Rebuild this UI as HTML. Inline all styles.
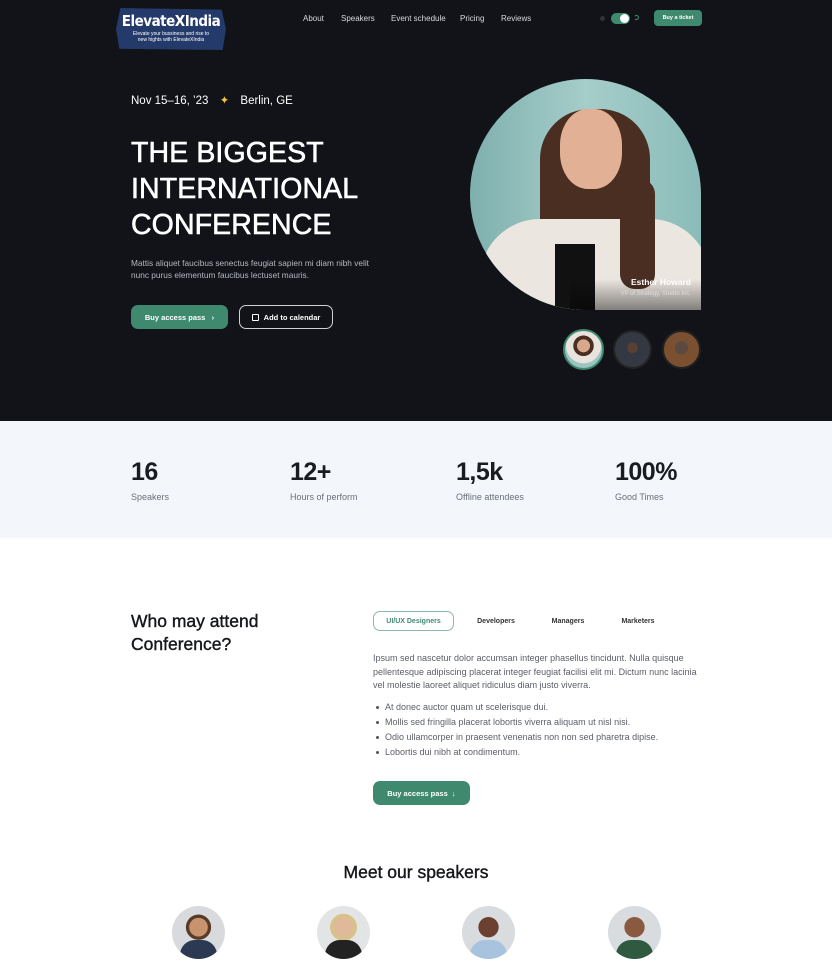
<!DOCTYPE html>
<html><head><meta charset="utf-8"><style>
*{margin:0;padding:0;box-sizing:border-box}
body{width:832px;height:974px;overflow:hidden;font-family:"Liberation Sans",sans-serif;background:#fff;position:relative}
.abs{position:absolute}
.hero{position:absolute;left:0;top:0;width:832px;height:421px;background:#111318}
.nav a{position:absolute;top:14px;color:#d8d9dc;font-size:8px}
.btn{position:absolute;border-radius:7px;font-size:7.5px;font-weight:bold;display:flex;align-items:center;justify-content:center;color:#fff}
.stats{position:absolute;left:0;top:421px;width:832px;height:117px;background:#f3f6fb}
.st{position:absolute;top:458px}
.st b{display:block;font-size:25px;color:#1a1c20;font-weight:bold;letter-spacing:-0.5px}
.st span{display:block;font-size:9px;color:#6b6f78;margin-top:5px}
.tab{position:absolute;top:611px;height:20px;font-size:7px;font-weight:bold;color:#333;display:flex;align-items:center;justify-content:center}
p.t{font-size:9px;color:#5a5e66;line-height:13.5px}
ul{list-style:none}
li{font-size:9px;color:#5a5e66;line-height:15px;padding-left:12px;position:relative}
li:before{content:"";position:absolute;left:3px;top:6px;width:3px;height:3px;border-radius:50%;background:#555}
.av{position:absolute;top:906px;width:53px;height:53px;border-radius:50%;background:#d5d8dc;overflow:hidden}
.semi{-webkit-text-stroke:0.6px currentColor}
</style></head><body>
<div class="hero"></div>
<div class="abs" style="left:116px;top:8px;width:110px;height:42px;background:#243a6b;clip-path:polygon(4% 0,96% 4%,100% 50%,97% 100%,3% 97%,0 50%)"></div>
<div class="abs" style="left:116px;top:12px;width:110px;text-align:center;color:#fff;font-size:15px;font-weight:bold;font-family:'DejaVu Sans Condensed','Liberation Sans',sans-serif;letter-spacing:-0.5px">ElevateXIndia</div>
<div class="abs" style="left:128px;top:32px;width:86px;text-align:center;color:#fff;font-size:5px;line-height:5.5px">Elevate your bussiness and rise to new hights with ElevateXIndia</div>
<div class="nav"><a style="left:303px">About</a><a style="left:341px">Speakers</a><a style="left:391px">Event schedule</a><a style="left:460px">Pricing</a><a style="left:501px">Reviews</a></div>
<div class="abs" style="left:600px;top:16px;width:5px;height:5px;border-radius:50%;background:#333"></div>
<div class="abs" style="left:611px;top:13px;width:19px;height:11px;border-radius:6px;background:#3f8a6f"></div>
<div class="abs" style="left:620px;top:14px;width:9px;height:9px;border-radius:50%;background:#fff"></div>
<div class="abs" style="left:634px;top:15px;width:5px;height:5px;border-radius:50%;border:1px solid #4a8a70;border-left-color:transparent"></div>
<div class="btn" style="left:654px;top:10px;width:48px;height:16px;background:#3f8a6f;border-radius:4px;font-size:5.5px">Buy a ticket</div>

<div class="abs" style="left:131px;top:93px;color:#fff;font-size:11.5px">Nov 15–16, ’23 <span style="color:#f5c242;margin:0 8px">✦</span> Berlin, GE</div>
<div class="abs semi" style="left:131px;top:135px;color:#fff;font-size:28.5px;line-height:36px;letter-spacing:0.1px">THE BIGGEST<br>INTERNATIONAL<br>CONFERENCE</div>
<div class="abs" style="left:131px;top:257px;width:240px;color:#b5b8be;font-size:8.3px;line-height:12px">Mattis aliquet faucibus senectus feugiat sapien mi diam nibh velit nunc purus elementum faucibus lectuset mauris.</div>
<div class="btn" style="left:131px;top:305px;width:97px;height:24px;background:#3f8a6f">Buy access pass &nbsp;&nbsp;›</div>
<div class="btn" style="left:239px;top:305px;width:94px;height:24px;border:1px solid #cfd1d4"><span style="display:inline-block;width:7px;height:7px;border:1px solid #fff;border-radius:1px;margin-right:5px"></span>Add to calendar</div>

<div class="abs" style="left:470px;top:79px;width:231px;height:231px;border-radius:50% 50% 0 50%;overflow:hidden;background:linear-gradient(90deg,#7fb0ae,#a5cdca 50%,#8bbcb9)">
 <div class="abs" style="left:70px;top:30px;width:110px;height:200px;border-radius:50px 50px 10px 10px;background:#4a2e22"></div>
 <div class="abs" style="left:90px;top:30px;width:62px;height:80px;border-radius:45%;background:#e2b195"></div>
 <div class="abs" style="left:10px;top:140px;width:230px;height:120px;border-radius:60px 60px 0 0;background:#ece6e0"></div>
 <div class="abs" style="left:150px;top:100px;width:35px;height:110px;border-radius:15px;background:#4a2e22"></div>
 <div class="abs" style="left:85px;top:165px;width:40px;height:80px;background:#111"></div>
 <div class="abs" style="left:100px;top:200px;width:131px;height:31px;background:linear-gradient(rgba(0,0,0,0),rgba(0,0,0,.45))"></div>
 <div class="abs" style="right:10px;top:198px;color:#fff;font-size:8.5px;font-weight:bold">Esther Howard</div>
 <div class="abs" style="right:10px;top:212px;color:#ddd;font-size:6px">VP of Strategy, Stretto Inc.</div>
</div>
<div class="abs" style="left:563px;top:329px;width:41px;height:41px;border-radius:50%;border:2px solid #3f8a6f;background:radial-gradient(circle at 50% 40%,#d9a88c 0 22%,#4a2e22 23% 35%,#e9e3dd 36% 60%,#9cc5c2 61%)"></div>
<div class="abs" style="left:613px;top:330px;width:39px;height:39px;border-radius:50%;border:2px solid #222;background:radial-gradient(circle at 50% 45%,#5a4030 0 20%,#333842 21%)"></div>
<div class="abs" style="left:662px;top:330px;width:39px;height:39px;border-radius:50%;border:2px solid #222;background:radial-gradient(circle at 50% 45%,#5a4a40 0 25%,#7a5030 26%)"></div>

<div class="stats"></div>
<div class="st" style="left:131px"><b>16</b><span>Speakers</span></div>
<div class="st" style="left:290px"><b>12+</b><span>Hours of perform</span></div>
<div class="st" style="left:456px"><b>1,5k</b><span>Offline attendees</span></div>
<div class="st" style="left:615px"><b>100%</b><span>Good Times</span></div>

<div class="abs semi" style="left:131px;top:610px;font-size:17.5px;color:#15171b;line-height:23px;-webkit-text-stroke:0.4px #15171b">Who may attend<br>Conference?</div>
<div class="tab" style="left:373px;width:81px;border:1px solid #8fb7a8;border-radius:7px;color:#3f8a6f">UI/UX Designers</div>
<div class="tab" style="left:468px;width:56px">Developers</div>
<div class="tab" style="left:542px;width:52px">Managers</div>
<div class="tab" style="left:612px;width:52px">Marketers</div>
<div class="abs" style="left:373px;top:652px;width:330px"><p class="t">Ipsum sed nascetur dolor accumsan integer phasellus tincidunt. Nulla quisque pellentesque adipiscing placerat integer feugiat facilisi elit mi. Dictum nunc lacinia vel molestie laoreet aliquet ridiculus diam justo viverra.</p></div>
<ul class="abs" style="left:373px;top:700px;width:330px">
<li>At donec auctor quam ut scelerisque dui.</li>
<li>Mollis sed fringilla placerat lobortis viverra aliquam ut nisl nisi.</li>
<li>Odio ullamcorper in praesent venenatis non non sed pharetra dipise.</li>
<li>Lobortis dui nibh at condimentum.</li></ul>
<div class="btn" style="left:373px;top:781px;width:97px;height:24px;background:#3f8a6f">Buy access pass &nbsp;↓</div>

<div class="abs" style="left:0;top:862px;width:832px;text-align:center;font-size:17.5px;color:#15171b;-webkit-text-stroke:0.4px #15171b">Meet our speakers</div>
<div class="av" style="left:172px;background:radial-gradient(circle at 50% 40%,#c8946f 0 22%,#5a3b28 23% 30%,#d8dadd 31%)"><div class="abs" style="left:8px;top:34px;width:37px;height:25px;border-radius:15px 15px 0 0;background:#2b3a52"></div></div>
<div class="av" style="left:317px;background:radial-gradient(circle at 50% 40%,#e0b89a 0 22%,#d9c18c 23% 32%,#e3e4e6 33%)"><div class="abs" style="left:8px;top:34px;width:37px;height:25px;border-radius:15px 15px 0 0;background:#222"></div></div>
<div class="av" style="left:462px;background:radial-gradient(circle at 50% 40%,#6b4030 0 24%,#d8dcdf 25%)"><div class="abs" style="left:8px;top:34px;width:37px;height:25px;border-radius:15px 15px 0 0;background:#a8c3dd"></div></div>
<div class="av" style="left:608px;background:radial-gradient(circle at 50% 40%,#8a5a40 0 24%,#d8dcdf 25%)"><div class="abs" style="left:8px;top:34px;width:37px;height:25px;border-radius:15px 15px 0 0;background:#2f5a40"></div></div>
</body></html>
